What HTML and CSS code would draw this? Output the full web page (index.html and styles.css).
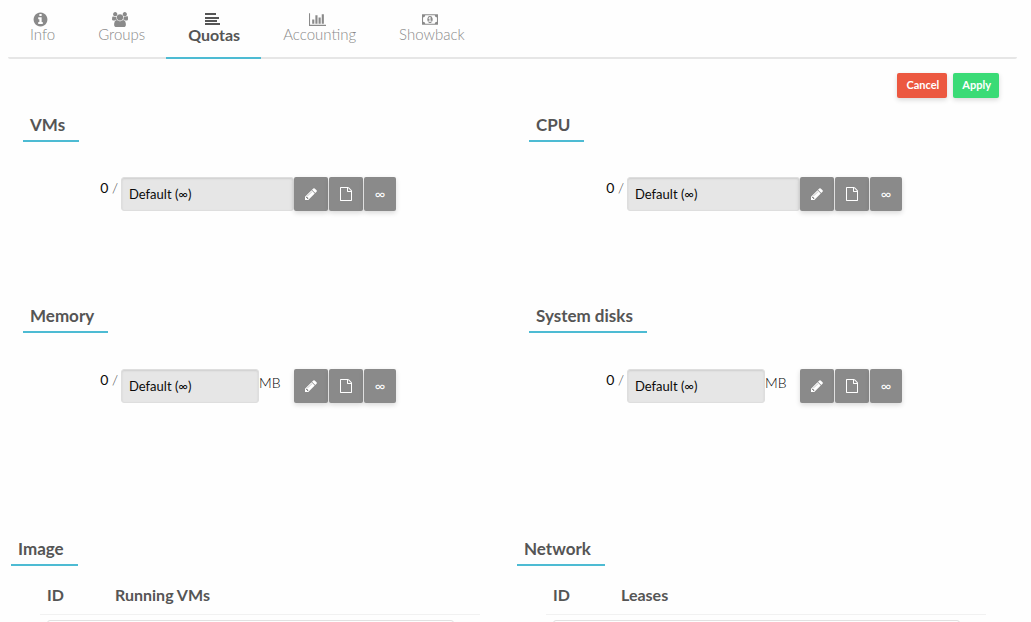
FILE: index.html
```html
<!DOCTYPE html>
<html lang="en">
<head>
<meta charset="utf-8">
<title>Quotas</title>
<link rel="stylesheet" href="styles.css">
</head>
<body>
<svg class="defs" aria-hidden="true">
  <symbol id="pencil" viewBox="128 0 1536 1792"><path d="M491 1536l91-91-235-235-91 91v107h128v128h107zm523-928q0-22-22-22-10 0-17 7l-542 542q-7 7-7 17 0 22 22 22 10 0 17-7l542-542q7-7 7-17zm-54-192l416 416-832 832h-416v-416zm683 96q0 53-37 90l-166 166-416-416 166-165q36-38 90-38 53 0 91 38l235 234q37 39 37 91z"/></symbol>
  <symbol id="file" viewBox="128 0 1536 1792"><path d="M1596 380q28 28 48 76t20 88v1152q0 40-28 68t-68 28h-1344q-40 0-68-28t-28-68v-1600q0-40 28-68t68-28h896q40 0 88 20t76 48zm-444-244v376h376q-10-29-22-41l-313-313q-12-12-41-22zm384 1528v-1024h-416q-40 0-68-28t-28-68v-416h-768v1536h1280z"/></symbol>
</svg>
<nav class="tabs">
  <a class="tab" href="#info">
    <svg class="tab-icon" width="15" height="15" viewBox="64 64 1664 1664"><path d="M1152 1376v-160q0-14-9-23t-23-9h-96v-512q0-14-9-23t-23-9h-320q-14 0-23 9t-9 23v160q0 14 9 23t23 9h96v320h-96q-14 0-23 9t-9 23v160q0 14 9 23t23 9h448q14 0 23-9t9-23zm-128-896v-160q0-14-9-23t-23-9h-192q-14 0-23 9t-9 23v160q0 14 9 23t23 9h192q14 0 23-9t9-23zm640 416q0 209-103 385.5t-279.5 279.5-385.5 103-385.5-103-279.5-279.5-103-385.5 103-385.5 279.5-279.5 385.5-103 385.5 103 279.5 279.5 103 385.5z"/></svg>
    Info
  </a>
  <a class="tab" href="#groups">
    <svg class="tab-icon" width="16" height="15" viewBox="64 0 1920 1792"><path d="M657 896q-162 5-265 128h-134q-82 0-138-40.5t-56-118.5q0-353 124-353 6 0 43.5 21t97.5 42.5 119 21.5q67 0 133-23-5 37-5 66 0 159 93 290zm1071 637q0 120-73 189.5t-194 69.5h-874q-121 0-194-69.5t-73-189.5q0-53 3.5-103.5t14-109 26.5-108.5 43-97.5 62-81 85.5-53.5 111.5-20q10 0 43 21.5t73 48 107 48 135 21.5 135-21.5 107-48 73-48 43-21.5q61 0 111.5 20t85.5 53.5 62 81 43 97.5 26.5 108.5 14 109 3.5 103.5zm-1024-1277q0 106-75 181t-181 75-181-75-75-181 75-181 181-75 181 75 75 181zm704 384q0 159-112.5 271.5t-271.5 112.5-271.5-112.5-112.5-271.5 112.5-271.5 271.5-112.5 271.5 112.5 112.5 271.5zm576 225q0 78-56 118.5t-138 40.5h-134q-103-123-265-128 93-131 93-290 0-29-5-66 66 23 133 23 59 0 119-21.5t97.5-42.5 43.5-21q124 0 124 353zm-128-609q0 106-75 181t-181 75-181-75-75-181 75-181 181-75 181 75 75 181z"/></svg>
    Groups
  </a>
  <a class="tab active" href="#quotas" aria-current="page">
    <svg class="tab-icon" width="15" height="15" viewBox="0 0 15 15"><path d="M0 1h11v2H0zM0 5h14v2H0zM0 8h12v2H0zM0 11h15v2H0z"/></svg>
    Quotas
  </a>
  <a class="tab" href="#accounting">
    <svg class="tab-icon" width="17" height="15" viewBox="0 0 2048 1792"><path d="M640 896v512h-256v-512h256zm384-512v1024h-256v-1024h256zm1024 1152v128h-2048v-1536h128v1408h1920zm-640-896v768h-256v-768h256zm384-384v1152h-256v-1152h256z"/></svg>
    Accounting
  </a>
  <a class="tab" href="#showback">
    <svg class="tab-icon" width="16" height="15" viewBox="0 0 1920 1792"><path d="M768 1152h384v-96h-128v-448h-114l-148 137 77 80q42-37 55-57h2v288h-128v96zm512-256q0 70-21 142t-59.5 134-101.5 101-138 39-138-39-101.5-101-59.5-134-21-142 21-142 59.5-134 101.5-101 138-39 138 39 101.5 101 59.5 134 21 142zm512 256v-512q-106 0-181-75t-75-181h-1152q0 106-75 181t-181 75v512q106 0 181 75t75 181h1152q0-106 75-181t181-75zm128-832v1152q0 26-19 45t-45 19h-1792q-26 0-45-19t-19-45v-1152q0-26 19-45t45-19h1792q26 0 45 19t19 45z"/></svg>
    Showback
  </a>
</nav>
<div class="actions">
  <button class="action cancel" type="button">Cancel</button>
  <button class="action apply" type="button">Apply</button>
</div>
<main class="quotas">
  <section class="panel">
    <h2 class="title">VMs</h2>
    <div class="quota">
      <label class="usage" for="vms">0 <span class="slash">/</span></label>
      <div class="field"><input class="limit" id="vms" type="text" value="Default (∞)" disabled></div>
      <div class="tools">
        <button class="tool" type="button" aria-label="Edit"><svg class="tool-icon"><use href="#pencil"/></svg></button>
        <button class="tool" type="button" aria-label="Default"><svg class="tool-icon"><use href="#file"/></svg></button>
        <button class="tool" type="button">∞</button>
      </div>
    </div>
  </section>
  <section class="panel">
    <h2 class="title">CPU</h2>
    <div class="quota">
      <label class="usage" for="cpu">0 <span class="slash">/</span></label>
      <div class="field"><input class="limit" id="cpu" type="text" value="Default (∞)" disabled></div>
      <div class="tools">
        <button class="tool" type="button" aria-label="Edit"><svg class="tool-icon"><use href="#pencil"/></svg></button>
        <button class="tool" type="button" aria-label="Default"><svg class="tool-icon"><use href="#file"/></svg></button>
        <button class="tool" type="button">∞</button>
      </div>
    </div>
  </section>
  <section class="panel tall">
    <h2 class="title">Memory</h2>
    <div class="quota">
      <label class="usage" for="memory">0 <span class="slash">/</span></label>
      <div class="field"><input class="limit" id="memory" type="text" value="Default (∞)" disabled><span class="unit">MB</span></div>
      <div class="tools">
        <button class="tool" type="button" aria-label="Edit"><svg class="tool-icon"><use href="#pencil"/></svg></button>
        <button class="tool" type="button" aria-label="Default"><svg class="tool-icon"><use href="#file"/></svg></button>
        <button class="tool" type="button">∞</button>
      </div>
    </div>
  </section>
  <section class="panel tall">
    <h2 class="title">System disks</h2>
    <div class="quota">
      <label class="usage" for="disks">0 <span class="slash">/</span></label>
      <div class="field"><input class="limit" id="disks" type="text" value="Default (∞)" disabled><span class="unit">MB</span></div>
      <div class="tools">
        <button class="tool" type="button" aria-label="Edit"><svg class="tool-icon"><use href="#pencil"/></svg></button>
        <button class="tool" type="button" aria-label="Default"><svg class="tool-icon"><use href="#file"/></svg></button>
        <button class="tool" type="button">∞</button>
      </div>
    </div>
  </section>
  <section class="resource">
    <h2 class="title">Image</h2>
    <table class="list">
      <thead><tr><th class="id">ID</th><th>Running VMs</th></tr></thead>
      <tbody><tr><td colspan="2"><input class="entry" type="text" aria-label="Image ID"></td></tr></tbody>
    </table>
  </section>
  <section class="resource">
    <h2 class="title">Network</h2>
    <table class="list">
      <thead><tr><th class="id">ID</th><th>Leases</th></tr></thead>
      <tbody><tr><td colspan="2"><input class="entry" type="text" aria-label="Network ID"></td></tr></tbody>
    </table>
  </section>
</main>
</body>
</html>
```
FILE: styles.css
```css
* { box-sizing: border-box; }
body {
  margin: 0;
  background: #fefefe;
  color: #0a0a0a;
  font-family: Lato, sans-serif;
  font-size: 13px;
}
.defs { display: none; }
.tabs {
  display: flex;
  margin: 0 14px 0 8px;
  padding-top: 12px;
  border-bottom: 2px solid #e6e6e6;
  border-radius: 2px;
}
.tab {
  display: flex;
  flex-direction: column;
  align-items: center;
  height: 47px;
  margin-bottom: -2px;
  padding: 0 21px 0 22px;
  color: #8a8a8a;
  font-size: 15px;
  font-weight: 300;
  line-height: 15px;
  text-decoration: none;
}
.tab.active {
  border-bottom: 2px solid #4dbbd3;
  color: #555;
  font-size: 16px;
  font-weight: 700;
}
.tab-icon { margin-right: 4px; fill: currentColor; }
.actions {
  display: flex;
  justify-content: flex-end;
  gap: 6px;
  padding: 14px 32px 0 0;
}
.action {
  height: 25px;
  padding: 0 8px 2px 9px;
  border: 0;
  border-radius: 2px;
  box-shadow: 0 2px 5px rgba(0, 0, 0, .15);
  color: #fff;
  font: 700 11px Lato, sans-serif;
}
.cancel { background: #ec5840; }
.apply { background: #3adb76; }
.quotas {
  display: grid;
  grid-template-columns: 1fr 1fr;
  padding: 12px 8px 0 11px;
}
.panel { height: 191px; padding-left: 12px; }
.panel.tall { height: 233px; }
.title {
  display: table;
  margin: 0;
  padding: 2px 14px 2px 7px;
  border-bottom: 2px solid #4dbbd3;
  color: #555;
  font-size: 17px;
  font-weight: 700;
  line-height: 26px;
}
.quota {
  display: grid;
  grid-template-columns: 98fr 173fr 102fr 121fr;
  margin-top: 35px;
}
.tall .quota { margin-top: 36px; }
.usage {
  padding: 3px 3px 0 0;
  font-size: 14px;
  line-height: 16px;
  text-align: right;
}
.slash { color: #444; font-weight: 300; }
.field { display: flex; min-width: 0; }
.limit {
  flex: 1;
  min-width: 0;
  height: 34px;
  padding: 0 7px;
  border: 1px solid #dedede;
  border-radius: 3px;
  background: #e6e6e6;
  box-shadow: inset 0 1px 2px rgba(10, 10, 10, .1);
  color: #0a0a0a;
  font: 13px Lato, sans-serif;
}
.unit {
  width: 35px;
  padding-top: 5px;
  color: #000;
  font-size: 14px;
  font-weight: 300;
  line-height: 18px;
}
.tools { display: flex; gap: 1px; }
.tool {
  display: flex;
  flex: 17;
  align-items: center;
  justify-content: center;
  height: 34px;
  padding: 0;
  border: 0;
  border-radius: 2px;
  background: #8a8a8a;
  box-shadow: 0 2px 5px rgba(0, 0, 0, .15);
  color: #fff;
  font: 14px Lato, sans-serif;
}
.tool:last-child { flex: 16; padding-bottom: 2px; }
.tool-icon { width: 12px; height: 14px; fill: currentColor; }
.list {
  width: 440px;
  margin-left: 29px;
  border-collapse: collapse;
  color: #555;
  font-size: 16px;
}
.list th {
  height: 48px;
  padding: 10px 7px 0;
  border-bottom: 1px solid #f1f1f1;
  line-height: 20px;
  text-align: left;
}
.list .id { width: 68px; }
.list td { padding: 5px 26px 0 7px; }
.entry {
  display: block;
  width: 100%;
  height: 34px;
  border: 1px solid #e1e1e1;
  border-radius: 3px;
  background: #fefefe;
}
```
